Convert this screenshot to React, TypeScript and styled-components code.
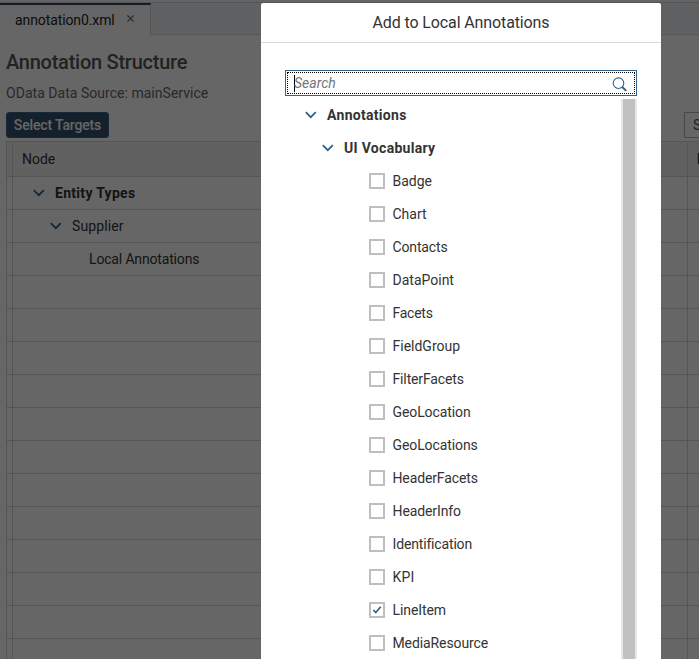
import React from "react";
import styled, { createGlobalStyle } from "styled-components";

const Global = createGlobalStyle`
  * { box-sizing: border-box; }
  body { margin: 0; overflow: hidden; }
`;

const Screen = styled.div`
  position: relative;
  width: 699px;
  height: 659px;
  overflow: hidden;
  background: #fff;
  color: #333;
  font: 14px/20px Roboto, "Noto Sans", sans-serif;
  white-space: nowrap;
`;

const Label = styled.span<{ $spacing?: number; $weight?: number }>`
  letter-spacing: ${(p) => p.$spacing ?? 0}px;
  font-weight: ${(p) => p.$weight ?? 400};
`;

const TabStrip = styled.div`
  display: flex;
  height: 35px;
  padding-top: 2px;
  background: linear-gradient(#f9fafb 2px, #eff2f5 2px);
  border-bottom: 1px solid #d8dadc;
`;

const TabRow = styled.div`
  display: flex;
  flex: 1;
  border-top: 1px solid #cfd2d5;
`;

const Tab = styled.div`
  display: flex;
  align-items: center;
  gap: 12px;
  width: 151px;
  height: 32px;
  padding-left: 15px;
  background: #fff;
  border-top: 2px solid #34495e;
  border-right: 1px solid #cfd2d5;
  color: #222;
`;

const CloseIcon = styled.svg`
  width: 7px;
  height: 7px;
  margin-bottom: 3px;
  stroke: #666;
  stroke-width: 1.2;
`;

const Title = styled.h1`
  margin: 0;
  padding: 14px 0 0 6px;
  font-size: 20px;
  line-height: 26px;
  font-weight: 400;
  color: #555;
`;

const Subtitle = styled.div`
  padding: 8px 0 0 6px;
  color: #666;
`;

const Toolbar = styled.div`
  display: flex;
  justify-content: space-between;
  padding: 9px 0 0 6px;
  height: 38px;
`;

const Primary = styled.button`
  width: 103px;
  height: 26px;
  padding: 0;
  border: 1px solid #3a658b;
  border-radius: 3px;
  background: #33536e;
  color: #fff;
  font: inherit;
`;

const Secondary = styled.button`
  width: 15px;
  height: 26px;
  padding: 0 0 0 8px;
  border: 1px solid #b5b5b5;
  border-right: 0;
  background: #fff;
  color: #555;
  font: inherit;
  text-align: left;
`;

const Table = styled.div`
  margin-left: 6px;
  border: solid #d5d5d5;
  border-width: 1px 0 0 1px;
`;

const TableRow = styled.div<{ $head?: boolean }>`
  display: grid;
  grid-template-columns: 6px 675px 1fr;
  height: ${(p) => (p.$head ? 35 : 33)}px;
  padding-top: ${(p) => (p.$head ? 1 : 0)}px;
  background: ${(p) => (p.$head ? "#f2f2f2" : "#fff")};
  border-bottom: 1px solid #d5d5d5;
`;

const Cell = styled.div<{ $indent?: number; $head?: boolean }>`
  display: flex;
  align-items: center;
  overflow: hidden;
  padding-left: ${(p) => p.$indent ?? 0}px;
  padding-bottom: ${(p) => (p.$head ? 2 : 0)}px;
  border-right: 1px solid #d5d5d5;
`;

const LastCell = styled(Cell)`
  border-right: 0;
`;

const Overlay = styled.div`
  position: absolute;
  inset: 0;
  background: rgba(0, 0, 0, 0.6);
`;

const Dialog = styled.div`
  position: absolute;
  top: 3px;
  left: 261px;
  width: 400px;
  height: 656px;
  overflow: hidden;
  background: #fff;
  border-radius: 2px 2px 0 0;
`;

const DialogHeader = styled.div`
  display: flex;
  align-items: center;
  justify-content: center;
  height: 40px;
  border-bottom: 1px solid #d9d9d9;
  font-size: 16px;
  padding-top: 1px;
`;

const SearchField = styled.div`
  width: 352px;
  height: 26px;
  margin: 27px 24px 3px;
  padding: 1px;
  border: 1px solid #346187;
`;

const SearchFocus = styled.div`
  display: flex;
  align-items: center;
  justify-content: space-between;
  height: 22px;
  padding: 0 6px;
  border: 1px dotted #000;
`;

const Placeholder = styled.span`
  height: 17px;
  line-height: 17px;
  border-left: 1px solid #000;
  color: #757575;
  font-style: italic;
  text-indent: -1px;
`;

const SearchIcon = styled.svg`
  width: 16px;
  height: 16px;
  margin-top: 2px;
  fill: none;
  stroke: #346187;
`;

const ListArea = styled.div`
  display: flex;
  justify-content: space-between;
  width: 352px;
  height: 560px;
  margin-left: 24px;
`;

const Tree = styled.div`
  margin-top: -1px;
`;

const Scrollbar = styled.div`
  width: 16px;
  background: #c1c1c1;
  border: solid #e8e8e8;
  border-width: 0 2px;
`;

const TreeRow = styled.div<{ $indent: number; $gap?: number }>`
  display: flex;
  align-items: center;
  gap: ${(p) => p.$gap ?? 0}px;
  height: 33px;
  padding-left: ${(p) => p.$indent}px;
`;

const Box = styled.span`
  display: flex;
  align-items: center;
  justify-content: center;
  width: 16px;
  height: 16px;
  border: 2px solid #bfbfbf;
`;

const Arrow = styled.svg`
  flex: none;
  width: 12px;
  height: 8px;
  margin-right: 10px;
  fill: none;
  stroke: #346187;
  stroke-width: 1.8;
`;

const Chevron = () => (
  <Arrow viewBox="0 0 12 8">
    <path d="M.8 1.2 5.8 6.2 10.8 1.2" />
  </Arrow>
);

const items: [string, number][] = [
  ["Badge", 0],
  ["Chart", 0],
  ["Contacts", -0.15],
  ["DataPoint", 0],
  ["Facets", -0.25],
  ["FieldGroup", 0],
  ["FilterFacets", -0.14],
  ["GeoLocation", -0.1],
  ["GeoLocations", -0.1],
  ["HeaderFacets", -0.12],
  ["HeaderInfo", -0.1],
  ["Identification", -0.16],
  ["KPI", 0.15],
  ["LineItem", -0.1],
  ["MediaResource", -0.1],
];

export default function App() {
  return (
    <Screen>
      <Global />
      <TabStrip>
        <TabRow>
          <Tab>
            <Label $spacing={-0.1}>annotation0.xml</Label>
            <CloseIcon viewBox="0 0 7 7">
              <path d="M.4.4 6.6 6.6M6.6.4.4 6.6" />
            </CloseIcon>
          </Tab>
        </TabRow>
      </TabStrip>
      <Title>
        <Label $spacing={-0.25} $weight={500}>Annotation Structure</Label>
      </Title>
      <Subtitle>
        <Label $spacing={0.03}>OData Data Source: mainService</Label>
      </Subtitle>
      <Toolbar>
        <Primary>
          <Label $spacing={-0.15} $weight={500}>Select Targets</Label>
        </Primary>
        <Secondary>S</Secondary>
      </Toolbar>
      <Table>
        <TableRow $head>
          <Cell />
          <Cell $indent={9} $head>
            <Label>Node</Label>
          </Cell>
          <LastCell $indent={9} $head>
            <Label $weight={700}>N</Label>
          </LastCell>
        </TableRow>
        <TableRow>
          <Cell />
          <Cell $indent={20}>
            <Chevron />
            <Label $spacing={0.3} $weight={700}>Entity Types</Label>
          </Cell>
        </TableRow>
        <TableRow>
          <Cell />
          <Cell $indent={37}>
            <Chevron />
            <Label $spacing={0.1}>Supplier</Label>
          </Cell>
        </TableRow>
        <TableRow>
          <Cell />
          <Cell $indent={76}>
            <Label $spacing={-0.16}>Local Annotations</Label>
          </Cell>
        </TableRow>
        {Array.from({ length: 12 }, (_, i) => (
          <TableRow key={i}>
            <Cell />
            <Cell />
          </TableRow>
        ))}
      </Table>
      <Overlay />
      <Dialog>
        <DialogHeader>
          <Label $spacing={-0.12}>Add to Local Annotations</Label>
        </DialogHeader>
        <SearchField>
          <SearchFocus>
            <Placeholder>Search</Placeholder>
            <SearchIcon viewBox="0 0 16 16">
              <circle cx="6.5" cy="7.2" r="5.3" strokeWidth="1.1" />
              <path d="m10.3 11 3.9 3.9" strokeWidth="2" />
            </SearchIcon>
          </SearchFocus>
        </SearchField>
        <ListArea>
          <Tree>
            <TreeRow $indent={20}>
              <Chevron />
              <Label $spacing={0.3} $weight={700}>Annotations</Label>
            </TreeRow>
            <TreeRow $indent={37}>
              <Chevron />
              <Label $spacing={0.3} $weight={700}>UI Vocabulary</Label>
            </TreeRow>
            {items.map(([name, spacing]) => (
              <TreeRow key={name} $indent={84} $gap={7.5}>
                <Box>
                  {name === "LineItem" && (
                    <svg width="10" height="10" viewBox="0 0 10 10" fill="none" stroke="#346187" strokeWidth="1.7">
                      <path d="m1.3 5 2.5 2.6L8.7 1.8" />
                    </svg>
                  )}
                </Box>
                <Label $spacing={spacing}>{name}</Label>
              </TreeRow>
            ))}
          </Tree>
          <Scrollbar />
        </ListArea>
      </Dialog>
    </Screen>
  );
}
